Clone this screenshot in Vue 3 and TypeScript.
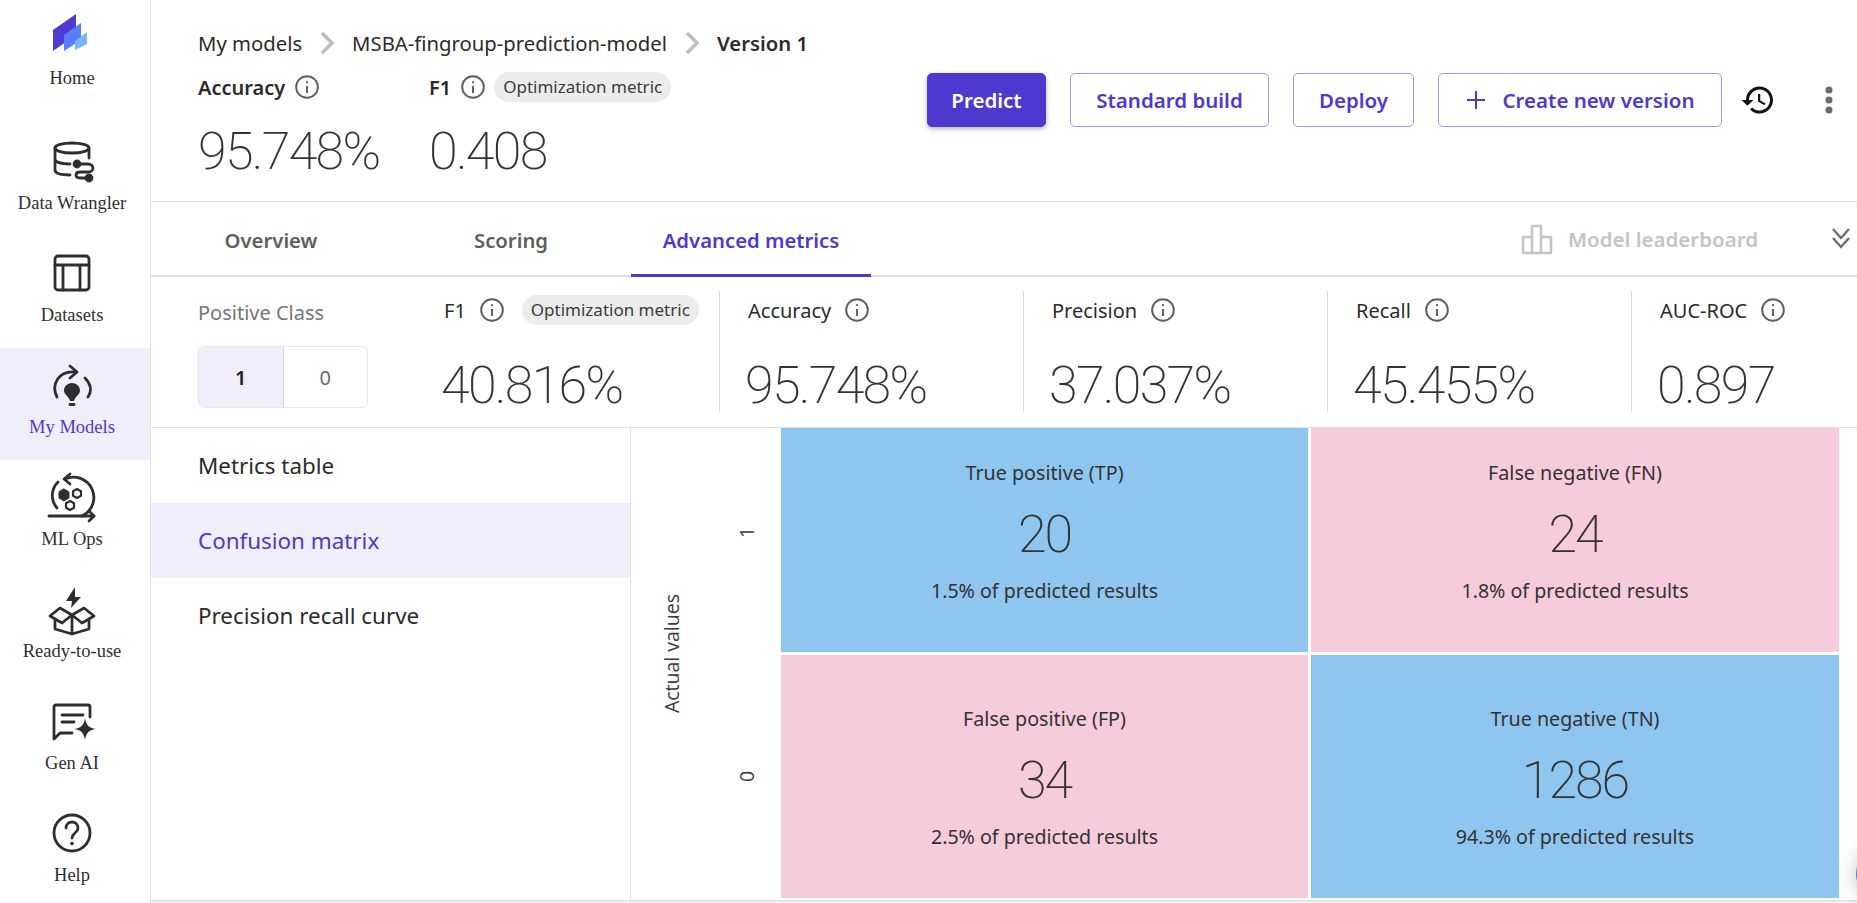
<template>
  <div class="app">
    <nav class="sidebar">
      <a v-for="item in navItems" :key="item.label" class="nav-item" :class="{ active: item.label === 'My Models', home: item.label === 'Home' }">
        <svg class="nav-icon" viewBox="0 0 48 48" width="48" height="48" fill="none" stroke="#2e2e2e" stroke-width="2.800" stroke-linecap="round" stroke-linejoin="round">
          <template v-if="item.label === 'Home'">
            <polygon points="5,21 28,5 28,26 5,42" fill="#4f3bd1" stroke="none" />
            <polygon points="16,26 33,14 33,31 16,42" fill="#5a7dfb" stroke="none" />
            <polygon points="27,32 39,23 39,35 27,41" fill="#7ab3ff" stroke="none" />
          </template>
          <template v-else-if="item.label === 'Data Wrangler'">
            <ellipse cx="24" cy="11" rx="17" ry="5" />
            <path d="M7 11v22c0 3 5 5 15 5M41 11v10M7 22c0 3 6 5 15 5" />
            <path d="M29 27h11c3 0 5 2 5 4s-2 4-5 4h-8c-3 0-4 1.500-4 3s1 3 4 3h9" />
            <circle cx="29" cy="27" r="3" fill="#2e2e2e" />
            <circle cx="41" cy="41" r="3" fill="#2e2e2e" />
          </template>
          <template v-else-if="item.label === 'Datasets'">
            <rect x="7" y="7" width="34" height="34" rx="3" />
            <path d="M7 16h34M15 16v25M32 16v25" />
          </template>
          <template v-else-if="item.label === 'My Models'">
            <path d="M9 36C3 24 10 9 28 11" />
            <path d="M22 5l7 6-7 6" />
            <path d="M37 17c6 6 7 13 3 19" />
            <path d="M24 22c-5 0-8 4-8 7.500 0 4 5 6 6 10.500h4c1-4.500 6-6.500 6-10.500 0-3.500-3-7.500-8-7.500z" fill="#2e2e2e" stroke="none" />
            <path d="M22 43.500h4" />
          </template>
          <template v-else-if="item.label === 'ML Ops'">
            <path d="M10 9a19 19 0 0 0-1 26" />
            <path d="M17 6a19 19 0 0 1 17 37" />
            <path d="M1 43h45" />
            <path d="M41 38l5 5-5 5" />
            <path d="M22 1l-6 5 6 5" />
            <polygon points="16,16 21,19 21,25 16,28 11,25 11,19" fill="#2e2e2e" stroke-width="1" />
            <polygon points="29,16 33,18.300 33,22.700 29,25 25,22.700 25,18.300" stroke-width="2.200" />
            <polygon points="22,28 26,30.300 26,34.700 22,37 18,34.700 18,30.300" stroke-width="2.200" />
          </template>
          <template v-else-if="item.label === 'Ready-to-use'">
            <polygon points="27,2 18,16 24,16 23,23 33,12 27,12" fill="#2e2e2e" stroke="none" />
            <path d="M24 30L12 23 2 31l12 7 10-8 10 8 12-7-10-8-12 7" />
            <path d="M7 35v9l17 5 17-5v-9M24 32v17" />
          </template>
          <template v-else-if="item.label === 'Gen AI'">
            <path d="M24 36H12l-6 6V10a2 2 0 0 1 2-2h32a2 2 0 0 1 2 2v10" />
            <path d="M14 18h21M14 25h12" />
            <path d="M37 21c1 7 4 10 10.500 11-6.500 1-9.500 4-10.500 11-1-7-4-10-10.500-11 6.500-1 9.500-4 10.500-11z" fill="#2e2e2e" stroke="none" />
          </template>
          <template v-else>
            <circle cx="24" cy="24" r="18" />
            <path d="M18 19c0-4 3-6 6-6s6 2 6 6c0 5-6 5-6 10" />
            <circle cx="24" cy="34.500" r="1.800" fill="#2e2e2e" stroke="none" />
          </template>
        </svg>
        <span class="nav-label">{{ item.label }}</span>
      </a>
    </nav>

    <main class="main">
      <header class="top">
        <div class="top-left">
          <div class="crumbs">
            <span>My models</span>
            <svg class="crumb-sep" viewBox="0 0 14 24" width="14" height="24" fill="none" stroke="#bdbdbd" stroke-width="3.500"><path d="M2 2l10 10-10 10" /></svg>
            <span>MSBA-fingroup-prediction-model</span>
            <svg class="crumb-sep" viewBox="0 0 14 24" width="14" height="24" fill="none" stroke="#bdbdbd" stroke-width="3.500"><path d="M2 2l10 10-10 10" /></svg>
            <strong>Version 1</strong>
          </div>
          <div class="top-metrics">
            <div class="top-metric first">
              <div class="metric-head">
                <b>Accuracy</b>
                <svg class="info" viewBox="0 0 24 24" width="26" height="26" fill="none" stroke="#5f5f5f" stroke-width="1.800"><circle cx="12" cy="12" r="10" /><path d="M12 11v6.500" /><circle cx="12" cy="7.500" r="1" fill="#5f5f5f" stroke="none" /></svg>
              </div>
              <div class="big">95.748%</div>
            </div>
            <div class="top-metric">
              <div class="metric-head">
                <b>F1</b>
                <svg class="info" viewBox="0 0 24 24" width="26" height="26" fill="none" stroke="#5f5f5f" stroke-width="1.800"><circle cx="12" cy="12" r="10" /><path d="M12 11v6.500" /><circle cx="12" cy="7.500" r="1" fill="#5f5f5f" stroke="none" /></svg>
                <span class="pill">Optimization metric</span>
              </div>
              <div class="big">0.408</div>
            </div>
          </div>
        </div>
        <div class="actions">
          <button class="btn primary predict">Predict</button>
          <button class="btn standard">Standard build</button>
          <button class="btn deploy">Deploy</button>
          <button class="btn create">
            <svg viewBox="0 0 20 20" width="20" height="20" fill="none" stroke="#4d39d0" stroke-width="2"><path d="M10 1v18M1 10h18" /></svg>
            Create new version
          </button>
          <svg class="history" viewBox="0 0 24 24" width="36" height="36" fill="#111"><path d="M13 3a9 9 0 0 0-9 9H1l3.900 3.900L9 12H6a7 7 0 1 1 2.050 4.950l-1.420 1.420A9 9 0 1 0 13 3zm-1 5v5l4.280 2.540.72-1.210-3.500-2.080V8H12z" /></svg>
          <svg class="kebab" viewBox="0 0 8 28" width="8" height="28" fill="#6b6b6b"><circle cx="4" cy="4" r="3.500" /><circle cx="4" cy="14" r="3.500" /><circle cx="4" cy="24" r="3.500" /></svg>
        </div>
      </header>

      <div class="tabs">
        <a v-for="tab in tabs" :key="tab" class="tab" :class="{ current: tab === 'Advanced metrics' }">{{ tab }}</a>
        <div class="tabs-right">
          <svg viewBox="0 0 32 32" width="32" height="32" fill="none" stroke="#c4c4c4" stroke-width="2.500"><path d="M2 30V14h9v16M11 30V3h9v27M20 30V14h10v16M1 30h30" /></svg>
          <span>Model leaderboard</span>
        </div>
        <svg class="collapse" viewBox="0 0 20 22" width="20" height="22" fill="none" stroke="#6e6e6e" stroke-width="2.400"><path d="M2 2l8 9 8-9M2 11l8 9 8-9" /></svg>
      </div>

      <section class="metrics">
        <div class="positive">
          <div class="positive-label">Positive Class</div>
          <div class="toggle">
            <span class="on">1</span>
            <span>0</span>
          </div>
        </div>
        <div v-for="m in metrics" :key="m.name" class="metric">
          <div class="metric-name">
            <span>{{ m.name }}</span>
            <svg class="info" viewBox="0 0 24 24" width="26" height="26" fill="none" stroke="#5f5f5f" stroke-width="1.800"><circle cx="12" cy="12" r="10" /><path d="M12 11v6.500" /><circle cx="12" cy="7.500" r="1" fill="#5f5f5f" stroke="none" /></svg>
            <span v-if="m.name === 'F1'" class="pill">Optimization metric</span>
          </div>
          <div class="big">{{ m.value }}</div>
        </div>
      </section>

      <section class="content">
        <aside class="side-list">
          <a v-for="s in sideItems" :key="s" class="side-item" :class="{ current: s === 'Confusion matrix' }">{{ s }}</a>
        </aside>
        <div class="matrix-wrap">
          <div class="axis-title"><span>Actual values</span></div>
          <div class="axis-values"><span>1</span><span>0</span></div>
          <div class="matrix">
            <div v-for="c in cells" :key="c.title" class="cell" :class="c.good ? 'good' : 'bad'">
              <div class="cell-title">{{ c.title }}</div>
              <div class="cell-num">{{ c.count }}</div>
              <div class="cell-sub">{{ c.share }} of predicted results</div>
            </div>
          </div>
        </div>
      </section>
    </main>
    <span class="float-edge"></span>
  </div>
</template>

<script setup lang="ts">
const navItems = [
  { label: 'Home' },
  { label: 'Data Wrangler' },
  { label: 'Datasets' },
  { label: 'My Models' },
  { label: 'ML Ops' },
  { label: 'Ready-to-use' },
  { label: 'Gen AI' },
  { label: 'Help' },
]

const tabs = ['Overview', 'Scoring', 'Advanced metrics']

const metrics = [
  { name: 'F1', value: '40.816%' },
  { name: 'Accuracy', value: '95.748%' },
  { name: 'Precision', value: '37.037%' },
  { name: 'Recall', value: '45.455%' },
  { name: 'AUC-ROC', value: '0.897' },
]

const sideItems = ['Metrics table', 'Confusion matrix', 'Precision recall curve']

const cells = [
  { title: 'True positive (TP)', count: 20, share: '1.5%', good: true },
  { title: 'False negative (FN)', count: 24, share: '1.8%', good: false },
  { title: 'False positive (FP)', count: 34, share: '2.5%', good: false },
  { title: 'True negative (TN)', count: 1286, share: '94.3%', good: true },
]
</script>

<style>
html, body {
  margin: 0;
  background: #fff;
  overflow: hidden;
}
</style>

<style scoped>
.app {
  display: flex;
  width: 1857px;
  height: 903px;
  overflow: hidden;
  position: relative;
  font-family: "Noto Sans", "Liberation Sans", sans-serif;
  color: #2b2b2b;
}

/* left rail */
.sidebar {
  width: 150px;
  flex: none;
  border-right: 1px solid #e0e0e0;
  display: flex;
  flex-direction: column;
  font-family: "Liberation Serif", serif;
  font-size: 18.500px;
}

.nav-item {
  height: 112px;
  flex: none;
  display: flex;
  flex-direction: column;
  align-items: center;
  padding: 13px 6px 0 0;
  box-sizing: border-box;
  color: #2f2f2f;
}

.nav-item.home {
  height: 124px;
  padding-top: 9px;
}

.nav-item.active {
  background: #f0eefb;
  color: #4d39d0;
}

.nav-icon {
  display: block;
  overflow: visible;
}

.nav-label {
  line-height: 20px;
  margin-top: 8px;
  white-space: nowrap;
}

.home .nav-label {
  margin-top: 11px;
}

.main {
  flex: 1;
  min-width: 0;
  display: flex;
  flex-direction: column;
}

/* page header */
.top {
  height: 202px;
  flex: none;
  box-sizing: border-box;
  border-bottom: 1px solid #e0e0e0;
  padding: 30px 0 0 47px;
  display: flex;
  justify-content: space-between;
}

.crumbs {
  display: flex;
  align-items: center;
  gap: 18px;
  font-size: 20.300px;
  line-height: 26px;
}

.crumbs strong {
  font-weight: 600;
}

.top-metrics {
  display: flex;
  margin-top: 16px;
}

.top-metric.first {
  width: 231px;
}

.metric-head {
  display: flex;
  align-items: center;
  height: 30px;
  font-size: 20px;
}

.metric-head b {
  font-weight: 600;
}

.metric-head .info {
  margin-left: 9px;
}

.metric-head .pill {
  margin-left: 8px;
}

.pill {
  display: inline-block;
  height: 30px;
  line-height: 30px;
  padding: 0 9px;
  border-radius: 15px;
  background: #ececec;
  font-size: 17px;
  color: #3b3b3b;
  white-space: nowrap;
}

.big {
  font-family: Roboto, "Noto Sans", sans-serif;
  font-weight: 200;
  font-size: 52px;
  letter-spacing: -1.700px;
  line-height: 62px;
  color: #333;
  white-space: nowrap;
}

.top-metric .big {
  margin-top: 19px;
}

.actions {
  display: flex;
  align-items: center;
  height: 54px;
  margin-top: 43px;
  padding-right: 24px;
}

.btn {
  height: 54px;
  box-sizing: border-box;
  border-radius: 5px;
  border: 1px solid #a394ee;
  background: #fff;
  color: #4d39d0;
  font-family: inherit;
  font-size: 20.500px;
  font-weight: 600;
  display: flex;
  align-items: center;
  justify-content: center;
  gap: 17px;
  margin-left: 24px;
  padding: 0;
}

.btn.primary {
  background: #4d39d0;
  border-color: #4d39d0;
  color: #fff;
  box-shadow: 0 2px 5px rgba(0, 0, 0, 0.3);
}

.predict { width: 119px; margin-left: 0; }
.standard { width: 199px; }
.deploy { width: 121px; }
.create { width: 284px; }

.history {
  margin-left: 18px;
}

.kebab {
  margin-left: 49px;
}

/* tabs */
.tabs {
  height: 75px;
  flex: none;
  box-sizing: border-box;
  border-bottom: 2px solid #e0e0e0;
  display: flex;
  align-items: stretch;
  position: relative;
}

.tab {
  width: 240px;
  display: flex;
  align-items: center;
  justify-content: center;
  font-size: 20.300px;
  font-weight: 600;
  color: #5e5e5e;
  box-sizing: border-box;
  height: 75px;
}

.tab.current {
  color: #4d39d0;
  border-bottom: 3px solid #4d39d0;
  padding-top: 3px;
}

.tabs-right {
  margin-left: auto;
  margin-right: 99px;
  display: flex;
  align-items: center;
  gap: 15px;
  color: #c4c4c4;
  font-size: 20.500px;
  font-weight: 600;
}

.collapse {
  position: absolute;
  right: 6px;
  top: 25px;
}

/* metric strip */
.metrics {
  height: 151px;
  flex: none;
  box-sizing: border-box;
  border-bottom: 1px solid #e0e0e0;
  padding: 14px 0 0 47px;
  display: flex;
}

.positive {
  width: 218px;
  flex: none;
}

.positive-label {
  font-size: 20px;
  line-height: 24px;
  color: #767676;
  margin-top: 10px;
}

.toggle {
  margin-top: 21px;
  width: 170px;
  height: 62px;
  box-sizing: border-box;
  border: 1px solid #e6e6e6;
  border-radius: 6px;
  display: flex;
  overflow: hidden;
  font-size: 20px;
  color: #6a6a6a;
}

.toggle span {
  width: 85px;
  display: flex;
  align-items: center;
  justify-content: center;
}

.toggle .on {
  background: #f0eefb;
  border-right: 1px solid #d8d5ee;
  color: #222;
  font-weight: 600;
}

.metric {
  width: 304px;
  flex: none;
  box-sizing: border-box;
  height: 121px;
  padding-left: 28px;
  border-right: 1px solid #d9d9d9;
}

.metric:last-child {
  border-right: none;
}

.metric-name {
  display: flex;
  align-items: center;
  height: 38px;
  font-size: 20px;
  color: #2b2b2b;
}

.metric-name .info {
  margin-left: 13px;
}

.metric-name .pill {
  margin-left: 17px;
}

.metric .big {
  margin-top: 26px;
  margin-left: -3px;
}

/* confusion matrix area */
.content {
  height: 474px;
  flex: none;
  box-sizing: border-box;
  border-bottom: 2px solid #e4e4e4;
  display: flex;
}

.side-list {
  width: 480px;
  flex: none;
  box-sizing: border-box;
  border-right: 1px solid #e0e0e0;
  display: flex;
  flex-direction: column;
}

.side-item {
  height: 75px;
  flex: none;
  box-sizing: border-box;
  padding-left: 47px;
  display: flex;
  align-items: center;
  font-size: 22.400px;
  color: #2b2b2b;
}

.side-item.current {
  background: #f0eefb;
  color: #4d39d0;
}

.matrix-wrap {
  flex: 1;
  min-width: 0;
  display: flex;
}

.axis-title {
  width: 80px;
  flex: none;
  box-sizing: border-box;
  display: flex;
  align-items: center;
  justify-content: center;
  padding-bottom: 21px;
  font-family: "Open Sans", sans-serif;
  font-size: 19.500px;
  color: #3a3a3a;
}

.axis-title span {
  display: block;
  writing-mode: vertical-rl;
  transform: rotate(180deg);
}

.axis-values {
  width: 70px;
  flex: none;
  box-sizing: border-box;
  padding-left: 22px;
  display: grid;
  grid-template-rows: 224px 243px;
  row-gap: 3px;
  font-family: "Open Sans", sans-serif;
  font-size: 19.500px;
  color: #3a3a3a;
}

.axis-values span {
  box-sizing: border-box;
  writing-mode: vertical-rl;
  transform: rotate(180deg);
  text-align: center;
}

.axis-values span:first-child {
  padding-top: 16px;
}

.matrix {
  display: grid;
  grid-template-columns: 527px 528px;
  grid-template-rows: 224px 243px;
  gap: 3px;
}

.cell {
  display: flex;
  flex-direction: column;
  align-items: center;
  justify-content: center;
  color: #333;
  box-sizing: border-box;
}

.cell:nth-child(-n+2) {
  padding-bottom: 16px;
}

.cell:nth-child(n+3) {
  padding-top: 3px;
}

.cell.good { background: #8fc6f0; }
.cell.bad { background: #f6cbdb; }

.cell-title {
  font-size: 19.700px;
  line-height: 26px;
}

.cell-num {
  font-family: Roboto, "Noto Sans", sans-serif;
  font-weight: 200;
  font-size: 52px;
  letter-spacing: -2px;
  line-height: 62px;
  margin: 18px 0 12px;
}

.cell-sub {
  font-size: 19.600px;
  line-height: 26px;
}

/* chat launcher of the host page, only its edge is on screen */
.float-edge {
  position: absolute;
  right: -49px;
  top: 849px;
  width: 50px;
  height: 50px;
  border-radius: 50%;
  background: #2a8fe0;
  box-shadow: 0 0 20px rgba(0, 0, 0, 0.25);
}
</style>
